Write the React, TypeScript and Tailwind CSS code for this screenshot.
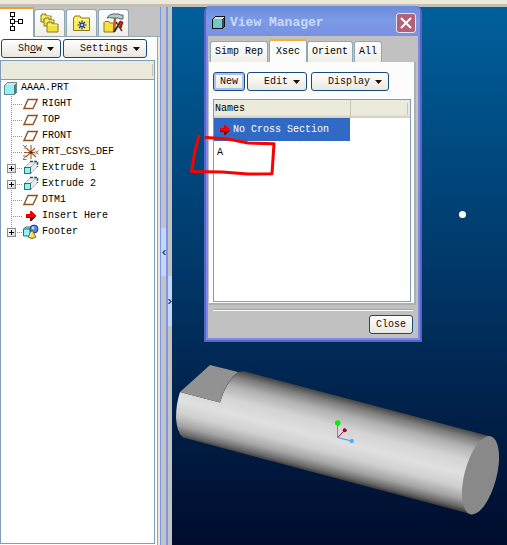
import { useState } from 'react'
import type { ReactNode } from 'react'

type IconName = 'plane' | 'csys' | 'extrude' | 'insert' | 'footer'

interface TreeItem {
  name: string
  icon: IconName
  expandable?: boolean
}

const treeItems: TreeItem[] = [
  { name: 'RIGHT', icon: 'plane' },
  { name: 'TOP', icon: 'plane' },
  { name: 'FRONT', icon: 'plane' },
  { name: 'PRT_CSYS_DEF', icon: 'csys' },
  { name: 'Extrude 1', icon: 'extrude', expandable: true },
  { name: 'Extrude 2', icon: 'extrude', expandable: true },
  { name: 'DTM1', icon: 'plane' },
  { name: 'Insert Here', icon: 'insert' },
  { name: 'Footer', icon: 'footer', expandable: true },
]

const managerTabs = ['Simp Rep', 'Xsec', 'Orient', 'All']

function PartIcon({ dark = false }: { dark?: boolean }) {
  return (
    <svg width="13" height="13" viewBox="0 0 13 13" shapeRendering="crispEdges" aria-hidden="true">
      <path d="M0 3L3 0H13V10L10 13H0Z" fill={dark ? '#101010' : '#6b8a8a'} />
      <path d="M1 3L3 1H12L10 3Z" fill="#d8e4e4" />
      <path d="M10 3L12 1V10L10 12Z" fill={dark ? '#3c4c50' : '#5f7474'} />
      <rect x="1" y="3" width="9" height="9" fill={dark ? '#6fc8cc' : '#8ff4f8'} />
    </svg>
  )
}

function ArrowIcon() {
  return (
    <svg width="12" height="12" viewBox="0 0 12 12" shapeRendering="crispEdges" aria-hidden="true">
      <path d="M1 4H5V1H6L11 6L6 11H5V8H1Z" fill="#f00000" />
      <path d="M1 7H10L6 11H5V8H1Z" fill="#8a0000" />
    </svg>
  )
}

function FolderShape({ x, y, w, h }: { x: number; y: number; w: number; h: number }) {
  return (
    <g>
      <path d={`M${x} ${y + h}V${y + 1}H${x + 1}V${y}H${x + 5}V${y + 2}H${x + w}V${y + h}Z`} fill="#f4e23c" stroke="#8c7a20" />
      <path d={`M${x + 1} ${y + 3}H${x + w - 1}`} stroke="#fffbc0" />
    </g>
  )
}

function TreeIcon({ name }: { name: IconName }) {
  switch (name) {
    case 'plane':
      return (
        <svg width="16" height="14" viewBox="0 0 16 14" aria-hidden="true">
          <path d="M5 2.5H14.3L10 11.5H1Z" fill="#fff" stroke="#94511f" strokeWidth="1.4" />
        </svg>
      )
    case 'csys':
      return (
        <svg width="16" height="16" viewBox="0 0 16 16" aria-hidden="true">
          <path d="M8 1V15M1 8.500H12M3 4L13 13M3 13L12 4" stroke="#9a5a2c" strokeWidth="1.1" fill="none" />
          <path d="M0 1L2 3L4 1M2 3V5M12 6.500L15.500 10.500M15.500 6.500L12 10.500M0 12H3L0 15.500H3.500" stroke="#777" fill="none" />
          <circle cx="8" cy="8.500" r="1.200" fill="#5c2c0c" />
        </svg>
      )
    case 'extrude':
      return (
        <svg width="16" height="16" viewBox="0 0 16 16" aria-hidden="true">
          <path d="M2 7L8 1H14V6L8 13Z" fill="#e6ecec" />
          <path d="M2 7L8 1M8 7L14 1M8 13L14 7" stroke="#8a9a9a" strokeDasharray="2 1" />
          <path d="M7 1.500H14.500V7" stroke="#2c5c5c" strokeWidth="1.500" strokeDasharray="3 1" fill="none" />
          <rect x="1.500" y="7.500" width="6" height="6" fill="#8ff4f8" stroke="#2f6f74" />
        </svg>
      )
    case 'insert':
      return <span className="pl-[2px]"><ArrowIcon /></span>
    case 'footer':
      return (
        <svg width="16" height="16" viewBox="0 0 16 16" aria-hidden="true">
          <path d="M.5 5L3 3H9V11L7 12H.5Z" fill="#8ff4f8" stroke="#356b70" />
          <path d="M.5 5H7V12" stroke="#356b70" fill="none" />
          <circle cx="11" cy="5" r="4" fill="#4a86e8" stroke="#1c3c8c" />
          <circle cx="10" cy="4" r="1.400" fill="#c4dcff" />
          <path d="M9 6L13 13Q9 16 5 13Z" fill="#f0dc50" stroke="#7a6a18" />
          <path d="M8.500 8L7 13" stroke="#fffbd0" />
        </svg>
      )
  }
}

function ModelTreeTabIcon() {
  return (
    <svg width="16" height="20" viewBox="0 0 16 20" shapeRendering="crispEdges" aria-hidden="true">
      <path d="M3.500 5V15M5 9.500H11" stroke="#333" />
      <g fill="#fff" stroke="#000">
        <rect x="1.500" y=".5" width="4" height="4" />
        <rect x="1.500" y="7.500" width="4" height="4" />
        <rect x="9.500" y="7.500" width="4" height="4" />
        <rect x="1.500" y="14.500" width="4" height="4" />
      </g>
    </svg>
  )
}

function LayersTabIcon() {
  return (
    <svg width="20" height="20" viewBox="0 0 20 20" aria-hidden="true">
      <FolderShape x={1} y={1} w={10} h={8} />
      <FolderShape x={4} y={5} w={10} h={8} />
      <FolderShape x={7} y={9} w={11} h={10} />
    </svg>
  )
}

function FavoritesTabIcon() {
  return (
    <svg width="18" height="17" viewBox="0 0 18 17" aria-hidden="true">
      <path d="M.5 15.500V3L2 1H7L8 3H16.500V15.500Z" fill="#f8ee60" stroke="#8c7a20" />
      <path d="M1.500 4.500H15.500" stroke="#fffbc0" />
      <path d="M9 5.500V14.500M4.500 10H13.500M6 7L12 13M12 7L6 13" stroke="#1230b0" strokeWidth="1.200" />
      <circle cx="9" cy="10" r="1" fill="#fff" />
    </svg>
  )
}

function ToolsTabIcon() {
  return (
    <svg width="22" height="20" viewBox="0 0 22 20" aria-hidden="true">
      <path d="M1 19V9.500L2 8.500H6L7 10H11V19Z" fill="#f6e03c" stroke="#8c7a20" />
      <path d="M12 5L11 19" stroke="#c05a34" strokeWidth="2.500" />
      <path d="M11 19L18 8" stroke="#2c2c2c" strokeWidth="1.800" />
      <path d="M16 9H20L18 15Z" fill="#e02020" stroke="#8c1010" />
      <path d="M13 9L19 18" stroke="#6c3014" strokeWidth="1.500" />
      <path d="M4 5Q6 1 10 1H16L17 2H20V6H17L15 5H9Q6 4 4 5Z" fill="#b4ced0" stroke="#4c6468" />
    </svg>
  )
}

interface XpButtonProps {
  children: ReactNode
  className?: string
  menu?: boolean
  focused?: boolean
}

function XpButton({ children, className = '', menu = false, focused = false }: XpButtonProps) {
  return (
    <button
      type="button"
      aria-haspopup={menu ? 'menu' : undefined}
      className={`flex h-[19px] items-center rounded-[3px] border border-[#174a7c] bg-linear-to-b from-white to-[#e9e7df] text-[#260808] ${
        focused ? 'shadow-[inset_0_0_0_2px_#a9c2f0]' : ''
      } ${menu ? 'justify-end pr-[6px]' : 'justify-center'} ${className}`}
    >
      <span>{children}</span>
      {menu && (
        <svg className="ml-[5px]" width="7" height="4" viewBox="0 0 7 4" aria-hidden="true">
          <path d="M0 0H7L3.500 4Z" fill="#260808" />
        </svg>
      )}
    </button>
  )
}

function NavigatorTabs() {
  const tabs = [
    { name: 'Layers', icon: <LayersTabIcon /> },
    { name: 'Favorites', icon: <FavoritesTabIcon /> },
    { name: 'Tools', icon: <ToolsTabIcon /> },
  ]

  return (
    <div role="tablist" className="flex h-[30px] items-end bg-[#c3c3c3]">
      <button
        type="button"
        role="tab"
        aria-label="Model Tree"
        aria-selected="true"
        className="flex h-[30px] w-[34px] justify-center border-t-2 border-r border-t-[#f0a030] border-r-[#91a7b4] bg-white pt-[3px]"
      >
        <ModelTreeTabIcon />
      </button>
      <div className="flex h-[28px] flex-1 gap-px border-b border-[#91a7b4]">
        {tabs.map((tab) => (
          <button
            key={tab.name}
            type="button"
            role="tab"
            aria-label={tab.name}
            aria-selected="false"
            className="flex w-[31px] items-center justify-center rounded-t-[3px] border border-b-0 border-[#91a7b4] bg-linear-to-b from-white to-[#efeee8]"
          >
            {tab.icon}
          </button>
        ))}
      </div>
    </div>
  )
}

function ModelTree() {
  return (
    <div className="mr-[2px] mb-px flex-1 border border-[#7f9db9] bg-white">
      <div className="flex h-4 items-center pl-[3px]">
        <PartIcon />
        <span className="ml-1">AAAA.PRT</span>
      </div>
      <ul>
        {treeItems.map((item, index) => (
          <li key={item.name} className="flex h-4 items-center">
            <span className="relative h-4 w-[22px] shrink-0">
              <svg width="22" height="16" viewBox="0 0 22 16" shapeRendering="crispEdges" aria-hidden="true">
                <path
                  d={index === treeItems.length - 1 ? 'M10.500 0V8M10 8.500H22' : 'M10.500 0V16M10 8.500H22'}
                  stroke="#909090"
                  strokeDasharray="1 1"
                />
              </svg>
              {item.expandable && (
                <button
                  type="button"
                  aria-label={`Expand ${item.name}`}
                  className="absolute top-1 left-[6px] size-[9px] border border-[#7b8ea4] bg-linear-to-br from-white to-[#d8d4c8]"
                >
                  <svg width="7" height="7" viewBox="0 0 7 7" shapeRendering="crispEdges" aria-hidden="true">
                    <path d="M1 3.500H6M3.500 1V6" stroke="#000" />
                  </svg>
                </button>
              )}
            </span>
            <span className="flex w-4 shrink-0 items-center">
              <TreeIcon name={item.icon} />
            </span>
            <span className="ml-[3px] whitespace-nowrap">{item.name}</span>
          </li>
        ))}
      </ul>
    </div>
  )
}

function Navigator() {
  return (
    <aside className="flex w-[160px] shrink-0 flex-col bg-[#ece9d8]">
      <NavigatorTabs />
      <div className="mr-[2px] flex flex-1 flex-col border-r border-[#91a7b4] bg-[#fcfcfa]">
        <div className="flex gap-[2px] py-[2px] pl-px">
          <XpButton menu className="w-[60px]">
            Sh<u>o</u>w
          </XpButton>
          <XpButton menu className="w-[84px]">
            Settin<u>g</u>s
          </XpButton>
        </div>
        <div className="mr-[2px] h-[19px] border border-b-0 border-[#7f9db9] bg-[#ebe9dc] py-[3px] pr-px">
          <div className="h-full border-r border-[#c4c1b0]" />
        </div>
        <ModelTree />
      </div>
    </aside>
  )
}

function Splitter() {
  return (
    <div className="flex w-3 shrink-0">
      <div className="flex w-[6px] flex-col border-l border-[#7b96e4] bg-[#c3c3c3]">
        <button
          type="button"
          aria-label="Collapse navigator"
          className="mt-[221px] flex h-[48px] items-center justify-center bg-[#c6d6fb]"
        >
          <svg width="4" height="5" viewBox="0 0 4 5" aria-hidden="true">
            <path d="M3.500 0L1 2.500L3.500 5" fill="none" stroke="#34507c" strokeWidth="1.500" />
          </svg>
        </button>
      </div>
      <div className="flex w-[6px] flex-col border-l-2 border-[#7b96e4] bg-[#c3c3c3]">
        <button
          type="button"
          aria-label="Expand browser"
          className="mt-[269px] flex h-[50px] items-center justify-center bg-[#c6d6fb]"
        >
          <svg width="4" height="5" viewBox="0 0 4 5" aria-hidden="true">
            <path d="M.5 0L3 2.500L.5 5" fill="none" stroke="#34507c" strokeWidth="1.500" />
          </svg>
        </button>
      </div>
    </div>
  )
}

function Model() {
  return (
    <svg
      className="absolute top-[348px] left-0"
      width="335"
      height="190"
      viewBox="172 355 335 190"
      role="img"
      aria-label="Cylinder model"
    >
      <defs>
        <linearGradient id="body" gradientUnits="userSpaceOnUse" x1="490.600" y1="436.400" x2="470.300" y2="514.300">
          <stop offset="0" stopColor="#484848" />
          <stop offset=".08" stopColor="#7c7c7c" />
          <stop offset=".2" stopColor="#b0b0b0" />
          <stop offset=".36" stopColor="#d4d4d4" />
          <stop offset=".54" stopColor="#e0e0e0" />
          <stop offset=".7" stopColor="#d0d0d0" />
          <stop offset=".84" stopColor="#a4a4a4" />
          <stop offset=".94" stopColor="#686868" />
          <stop offset="1" stopColor="#303030" />
        </linearGradient>
      </defs>
      <path
        d="M180 392L220 402.500Q226 382 238 372L244 371.300L490 436.300L471 514.200L183 437.500Q177 433 176 418Q176 404 180 392Z"
        fill="url(#body)"
      />
      <path d="M210 365L238 372Q226 381 220 402.500L180 392Z" fill="#929292" />
      <ellipse cx="480.500" cy="475.300" rx="16" ry="40.300" transform="rotate(14.700 480.500 475.300)" fill="#898989" />
      <path d="M337.500 437.500V424" stroke="#00e020" />
      <path d="M337.700 437.500L344.500 430.500" stroke="#a00038" />
      <path d="M337.700 437.500L351.500 441" stroke="#3c9cf0" strokeWidth="1.200" />
      <circle cx="337.700" cy="423" r="2.800" fill="#00f000" />
      <circle cx="344.700" cy="430.300" r="2" fill="#a00038" />
      <circle cx="351.700" cy="441" r="2.200" fill="#50b0ff" />
    </svg>
  )
}

function ViewManager() {
  const [activeTab, setActiveTab] = useState('Xsec')

  return (
    <section
      aria-label="View Manager"
      className="absolute -top-px left-8 flex h-[336px] w-[218px] flex-col rounded-t-[6px] border-2 border-t-0 border-[#5c63c8] bg-[#7b8be4] px-[2px] pb-[2px]"
    >
      <header className="-mx-[2px] flex h-[30px] items-center rounded-t-[5px] bg-linear-to-b from-[#6a8cdc] via-[#7c9ae6] to-[#7891e0] pt-[3px] pr-[4px] pl-[6px]">
        <PartIcon dark />
        <h1 className="ml-[5px] flex-1 text-[13px] font-bold text-[#cbdaf9]">View Manager</h1>
        <button
          type="button"
          aria-label="Close window"
          className="flex size-[20px] items-center justify-center rounded-[3px] border border-[#dfe4f8] bg-[#b5607a]"
        >
          <svg width="12" height="12" viewBox="0 0 12 12" aria-hidden="true">
            <path d="M1 1L11 11M11 1L1 11" stroke="#fff" strokeWidth="2" />
          </svg>
        </button>
      </header>

      <div className="flex flex-1 flex-col bg-[#c1c1c1] pt-[3px] pl-px">
        <div role="tablist" className="flex h-[23px] items-end pl-px">
          {managerTabs.map((tab) => (
            <button
              key={tab}
              type="button"
              role="tab"
              aria-selected={activeTab === tab}
              onClick={() => setActiveTab(tab)}
              className={`rounded-t-[3px] border-x whitespace-nowrap text-black ${
                activeTab === tab
                  ? 'h-[23px] border-t-2 border-x-[#91a7b4] border-t-[#f5b030] bg-[#fcfcfc] px-[6px]'
                  : 'mr-px h-[21px] border-t border-[#91a7b4] bg-linear-to-b from-white to-[#efeee8] px-1'
              }`}
            >
              {tab}
            </button>
          ))}
        </div>

        <div className="mr-[2px] flex flex-1 flex-col border-r-2 border-b-2 border-[#a8b0b0] bg-[#fcfcfc] pt-[10px] pr-[3px] pb-px pl-[4px]">
          <div className="flex gap-[2px]">
            <XpButton focused className="w-8">New</XpButton>
            <XpButton menu className="w-[60px]">Edit</XpButton>
            <XpButton menu className="ml-[2px] w-[78px]">Display</XpButton>
          </div>

          <div className="mt-2 flex-1 border border-[#7f9db9] bg-white">
            <table className="w-full border-collapse text-left">
              <thead>
                <tr className="h-[18px] bg-linear-to-b from-[#ebeadb] from-80% to-[#d0cdbd]">
                  <th className="w-[136px] border-r border-[#c7c5b2] p-0 pl-px font-normal">Names</th>
                  <th className="p-0 pr-[2px]" aria-label="Status">
                    <div className="h-3 border-r border-[#c7c5b2]" />
                  </th>
                </tr>
              </thead>
              <tbody>
                <tr className="h-[23px]">
                  <td className="bg-[#316ac5] p-0 pl-[5px] text-white">
                    <span className="flex items-center gap-[2px] whitespace-nowrap">
                      <ArrowIcon />
                      No Cross Section
                    </span>
                  </td>
                  <td />
                </tr>
                <tr className="h-[23px]">
                  <td className="p-0 pl-[3px]">A</td>
                  <td />
                </tr>
              </tbody>
            </table>
          </div>
        </div>

        <footer className="mr-[5px] ml-[4px] mt-[5px] flex justify-end border-t border-white pt-[4px] pb-[4px] shadow-[0_-1px_0_#a4a4a0]">
          <XpButton className="w-11">Close</XpButton>
        </footer>
      </div>
    </section>
  )
}

function Markup() {
  return (
    <svg
      className="pointer-events-none absolute top-0 left-0"
      width="335"
      height="348"
      viewBox="172 7 335 348"
      aria-hidden="true"
    >
      <circle cx="462.500" cy="214.500" r="3.500" fill="#fff" />
      <path
        d="M199 136L195 151L191.500 171.500L222 172L248 174L272 173.700L274 143.700L248 143L228 139L206 137.500"
        fill="none"
        stroke="#fa0000"
        strokeWidth="3"
        strokeLinecap="round"
        strokeLinejoin="round"
      />
    </svg>
  )
}

export default function App() {
  return (
    <div className="flex min-h-screen flex-col font-['Liberation_Mono',monospace] text-[10px] leading-4 text-black">
      <div className="h-[7px] border-b-3 border-[#c2bfb8] bg-[#ece9d8]" />
      <div className="flex flex-1">
        <Navigator />
        <Splitter />
        <main className="relative flex-1 bg-linear-to-b from-[#00609c] via-[#003768] to-[#000c2c]">
          <Model />
          <ViewManager />
          <Markup />
        </main>
      </div>
    </div>
  )
}
